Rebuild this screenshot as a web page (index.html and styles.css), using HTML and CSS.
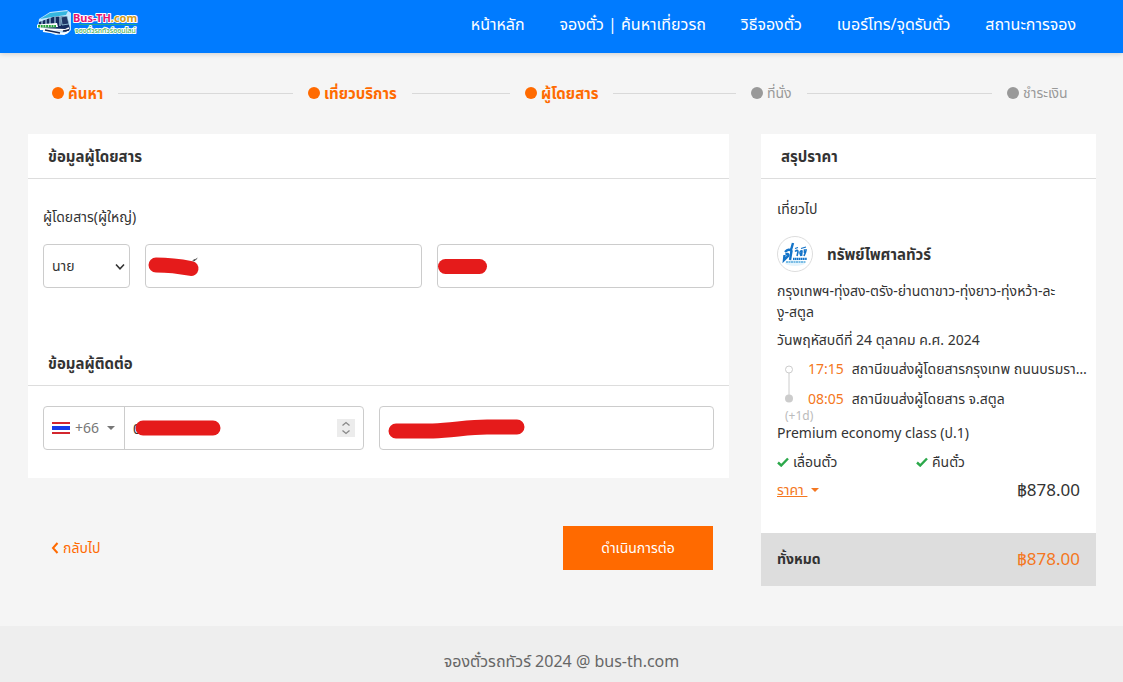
FILE: index.html
```html
<!DOCTYPE html>
<html lang="th">
<head>
<meta charset="utf-8">
<meta name="viewport" content="width=device-width, initial-scale=1">
<title>Bus-TH.com</title>
<link rel="stylesheet" href="styles.css">
</head>
<body>
<header class="topbar">
  <a class="brand" href="#" aria-label="Bus-TH.com">
    <svg class="logo" viewBox="0 0 106 28" aria-hidden="true">
      <path d="M3 9 14 2 31 0 35 3 35 20 31 24 20 25 2 18Z" fill="#e8faff" opacity=".85"/>
      <path d="M4 9 14 3 32 1 30 5 16 7Z" fill="#35b6df"/>
      <path d="M3 12 17 7 31 6 34 19 31 22 3 17Z" fill="#152b5e"/>
      <path d="M6 10v5M10 9v6M14 8v7M19 7v8M24 6v10" stroke="#c9f2ff" stroke-width="1"/>
      <path d="M25 7 31 6 33 14 26 15Z" fill="#203767" stroke="#b5e9f9" stroke-width=".7"/>
      <path d="M1 14.5 21 13 22 17 1 18Z" fill="#fff"/>
      <path d="M2 16.3h18" stroke="#24a53a" stroke-width="2.4" stroke-dasharray="2 .7"/>
      <path d="M4 19 29 20 33 18M7 21 28 24 33 21" fill="none" stroke="#fff" stroke-width="1.8"/>
      <path d="M9 20 24 23M27 21 33 20" stroke="#172650" stroke-width="1.5"/>
      <path d="M43 14.5h58" stroke="#35bd54" stroke-width=".7"/>
      <text class="logo-name" x="37" y="12"><tspan fill="#e61470">Bus-TH</tspan><tspan fill="#d39b17">.com</tspan></text>
      <text class="logo-tag" x="39" y="23">จองตั๋วรถทัวร์ออนไลน์</text>
    </svg>
  </a>
  <nav class="nav">
    <a href="#">หน้าหลัก</a>
    <a href="#">จองตั๋ว | ค้นหาเที่ยวรถ</a>
    <a href="#">วิธีจองตั๋ว</a>
    <a href="#">เบอร์โทร/จุดรับตั๋ว</a>
    <a href="#">สถานะการจอง</a>
  </nav>
</header>

<ol class="steps">
  <li class="step done"><span>ค้นหา</span></li>
  <li class="step done"><span>เที่ยวบริการ</span></li>
  <li class="step done"><span>ผู้โดยสาร</span></li>
  <li class="step"><span>ที่นั่ง</span></li>
  <li class="step"><span>ชำระเงิน</span></li>
</ol>

<main class="content">
  <form class="booking">
    <div class="card">
      <section>
        <h2 class="card-title">ข้อมูลผู้โดยสาร</h2>
        <div class="passenger">
          <p class="label">ผู้โดยสาร(ผู้ใหญ่)</p>
          <div class="passenger-fields">
            <div class="field">
              <select class="control select" aria-label="คำนำหน้า"><option>นาย</option></select>
              <svg class="chevron" viewBox="0 0 10 8" aria-hidden="true"><path d="M1 1.5 5 5.8 9 1.5"/></svg>
            </div>
            <div class="field">
              <input class="control" type="text" aria-label="ชื่อ">
              <svg class="mark" viewBox="0 0 150 44" aria-hidden="true"><path d="M11 21Q28 21 46 24.500"/><path class="tick" d="M48 16.500 50 15.500M49 17 52 14.500"/></svg>
            </div>
            <div class="field">
              <input class="control" type="text" aria-label="นามสกุล">
              <svg class="mark" viewBox="0 0 150 44" aria-hidden="true"><path d="M8.500 22.500H42.500"/></svg>
            </div>
          </div>
        </div>
      </section>
      <section>
        <h2 class="card-title">ข้อมูลผู้ติดต่อ</h2>
        <div class="contact">
          <div class="field phone">
            <button class="country" type="button" aria-label="รหัสประเทศ +66">
              <span class="flag"></span><span>+66</span><span class="caret"></span>
            </button>
            <div class="field phone-number">
              <input class="number" type="text" inputmode="tel" aria-label="หมายเลขโทรศัพท์" value="0">
              <svg class="mark" viewBox="0 0 150 44" aria-hidden="true"><path d="M18 22H88"/></svg>
            </div>
            <button class="spinner" type="button" aria-label="ปรับค่า">
              <svg viewBox="0 0 18 18" aria-hidden="true"><path d="M5.500 6.500 9 3.500 12.500 6.500M5.500 11.500 9 14.500 12.500 11.500"/></svg>
            </button>
          </div>
          <div class="field">
            <input class="control" type="email" aria-label="อีเมล">
            <svg class="mark" viewBox="0 0 150 44" aria-hidden="true"><path d="M17 25H54C75 24 90 21 108 21H138"/></svg>
          </div>
        </div>
      </section>
    </div>
    <div class="actions">
      <a class="back" href="#"><svg viewBox="0 0 8 12" aria-hidden="true"><path d="M6.500 1 2 6 6.500 11"/></svg>กลับไป</a>
      <button class="next" type="submit">ดำเนินการต่อ</button>
    </div>
  </form>

  <aside class="summary">
    <h2 class="card-title">สรุปราคา</h2>
    <div class="trip">
      <p>เที่ยวไป</p>
      <div class="operator">
        <svg class="operator-logo" viewBox="0 0 36 36" aria-hidden="true">
          <circle cx="18" cy="18" r="17.500" fill="#fff" stroke="#ddd"/>
          <ellipse cx="18" cy="27" rx="10" ry="3" fill="#e4f4fd"/>
          <g fill="none" stroke="#1373c8">
            <path d="M8 16Q12 12 14.500 15L13 24M8.500 18.500Q12 17 11 20L7 24 7.500 19M14 14 16 7" stroke-width="2.400"/>
            <path d="M18 15.500Q21 13 21 16L20 20M24 20 23 17Q23 14.500 25 15L24.500 20M29 15 27 20M27.500 17V14H30" stroke-width="1.600"/>
            <path d="M18 12.500 21 11.500M24 12.500 29 11" stroke-width="1.200"/>
            <path d="M16 22.800H30" stroke-width="2.200" stroke-dasharray="1.500 .4"/>
            <path d="M9 26H29" stroke="#58aadd" stroke-width="1.300" stroke-dasharray="2 .5"/>
          </g>
        </svg>
        <strong>ทรัพย์ไพศาลทัวร์</strong>
      </div>
      <p class="route">กรุงเทพฯ-ทุ่งสง-ตรัง-ย่านตาขาว-ทุ่งยาว-ทุ่งหว้า-ละ<br>งู-สตูล</p>
      <p class="date">วันพฤหัสบดีที่ 24 ตุลาคม ค.ศ. 2024</p>
      <div class="stops">
        <svg class="track" viewBox="0 0 10 38" aria-hidden="true"><path d="M5 8V30" stroke="#ccc"/><circle cx="5" cy="4.500" r="3.500" fill="#fff" stroke="#ccc"/><circle cx="5" cy="33.500" r="4" fill="#ccc"/></svg>
        <div class="stop-list">
          <p class="stop"><time>17:15</time><span>สถานีขนส่งผู้โดยสารกรุงเทพ ถนนบรมราชชนนี</span></p>
          <p class="stop"><time>08:05</time><span>สถานีขนส่งผู้โดยสาร จ.สตูล</span></p>
        </div>
      </div>
      <p class="plus-day">(+1d)</p>
      <p class="class-name">Premium economy class (ป.1)</p>
      <div class="perks">
        <span class="perk"><svg viewBox="0 0 12 10" aria-hidden="true"><path d="M1 5.500 4.200 8.500 11 1.500"/></svg>เลื่อนตั๋ว</span>
        <span class="perk"><svg viewBox="0 0 12 10" aria-hidden="true"><path d="M1 5.500 4.200 8.500 11 1.500"/></svg>คืนตั๋ว</span>
      </div>
      <div class="price">
        <a class="price-link" href="#"><span class="underlined">ราคา&nbsp;</span><span class="caret"></span></a>
        <span class="amount">฿878.00</span>
      </div>
    </div>
    <div class="total"><strong>ทั้งหมด</strong><span class="amount">฿878.00</span></div>
  </aside>
</main>

<footer class="footer">จองตั๋วรถทัวร์ 2024 @ bus-th.com</footer>
</body>
</html>
```
FILE: styles.css
```css
* {
  box-sizing: border-box;
}

body {
  margin: 0;
  min-height: 100vh;
  display: flex;
  flex-direction: column;
  background: #f5f5f5;
  color: #333;
  font: 14px/20px "Noto Sans", "Noto Sans Thai", "Open Sans", sans-serif;
}

p,
h2 {
  margin: 0;
}

a {
  color: inherit;
  text-decoration: none;
}

button,
input,
select {
  font: inherit;
  color: inherit;
}

.topbar {
  display: flex;
  align-items: center;
  justify-content: space-between;
  height: 53px;
  padding: 0 47px 5px 36px;
  background: #007bff;
  box-shadow: 0 1px 5px rgba(0, 0, 0, 0.16);
}

.brand,
.logo {
  display: block;
}

.logo {
  width: 106px;
  height: 28px;
}

.logo-name,
.logo-tag {
  paint-order: stroke;
  stroke: #fff;
  stroke-width: 2px;
  stroke-linejoin: round;
}

.logo-name {
  font-size: 11px;
  font-weight: 700;
}

.logo-tag {
  font-size: 7px;
  fill: #28a53b;
}

.nav {
  display: flex;
  gap: 35px;
  color: #fff;
  font-size: 16px;
  line-height: 24px;
  white-space: nowrap;
}

.steps {
  display: grid;
  grid-template-columns: 256fr 217fr 226fr 256fr 65px;
  margin: 0;
  padding: 30px 51px 0 52px;
  list-style: none;
}

.step {
  display: flex;
  align-items: center;
  gap: 4px;
  color: #999;
  line-height: 20px;
  white-space: nowrap;
}

.step::before {
  content: "";
  flex: none;
  width: 12px;
  height: 12px;
  border-radius: 50%;
  background: #999;
}

.step:not(:last-child)::after {
  content: "";
  flex: 1;
  height: 1px;
  margin: 0 15px 0 11px;
  background: #d9d9d9;
}

.done {
  color: #ff6a00;
  font-size: 15px;
  font-weight: 700;
}

.done::before {
  background: #ff6a00;
}

.content {
  display: grid;
  grid-template-columns: 701fr 335fr;
  gap: 32px;
  align-items: start;
  padding: 31px 27px 40px 28px;
}

.booking,
.summary {
  min-width: 0;
}

.card,
.summary {
  background: #fff;
}

.card-title {
  padding: 12px 20px;
  border-bottom: 1px solid #ddd;
  font-size: 15px;
  font-weight: 700;
  line-height: 20px;
}

.passenger {
  padding: 28px 15px 53px;
}

.label {
  margin-bottom: 17px;
}

.passenger-fields {
  display: grid;
  grid-template-columns: 87px 1fr 1fr;
  gap: 15px;
}

.contact {
  display: grid;
  grid-template-columns: 321fr 335fr;
  gap: 15px;
  padding: 20px 15px 28px;
}

.field {
  position: relative;
  min-width: 0;
}

.control,
.phone {
  display: block;
  width: 100%;
  height: 44px;
  border: 1px solid #ccc;
  border-radius: 4px;
  background: #fff;
}

.control {
  padding: 0 8px;
}

.select {
  appearance: none;
}

.chevron {
  position: absolute;
  right: 5px;
  top: 19px;
  width: 10px;
  height: 8px;
  fill: none;
  stroke: #333;
  stroke-width: 1.6;
  pointer-events: none;
}

.mark {
  position: absolute;
  left: 0;
  top: 0;
  width: 150px;
  height: 44px;
  fill: none;
  stroke: #e51b1b;
  stroke-width: 15;
  stroke-linecap: round;
  stroke-linejoin: round;
  pointer-events: none;
}

.tick {
  stroke: #444;
  stroke-width: 1;
}

.phone {
  display: flex;
  align-items: center;
}

.country {
  display: flex;
  align-items: center;
  gap: 5px;
  width: 81px;
  height: 42px;
  padding: 0 8px;
  border: 0;
  border-right: 1px solid #ccc;
  background: none;
  color: #777;
}

.flag {
  width: 18px;
  height: 12px;
  background: linear-gradient(#d3262f 2px, #fff 2px 4px, #173be8 4px 8px, #fff 8px 10px, #d3262f 10px);
}

.caret {
  display: inline-block;
  border: 4px solid transparent;
  border-top-color: currentColor;
  border-bottom: 0;
}

.country .caret {
  margin-left: 3px;
}

.phone-number {
  flex: 1;
  height: 42px;
}

.number {
  width: 100%;
  height: 42px;
  padding: 0 8px;
  border: 0;
  background: none;
}

.phone-number .mark {
  top: -1px;
}

.spinner {
  width: 18px;
  height: 18px;
  margin-right: 8px;
  padding: 0;
  border: 0;
  background: #ececec;
}

.spinner svg {
  display: block;
  fill: none;
  stroke: #888;
  stroke-width: 1.3;
}

.actions {
  display: flex;
  align-items: center;
  justify-content: space-between;
  padding: 48px 16px 0 23px;
}

.back {
  display: flex;
  align-items: center;
  gap: 4px;
  color: #ff6a00;
}

.back svg {
  width: 8px;
  height: 12px;
  fill: none;
  stroke: currentColor;
  stroke-width: 2;
}

.next {
  width: 150px;
  height: 44px;
  border: 0;
  background: #ff6a00;
  color: #fff;
}

.trip {
  padding: 20px 16px 31px;
}

.operator {
  display: flex;
  align-items: center;
  gap: 14px;
  margin: 17px 0 8px;
  font-size: 15px;
}

.operator-logo {
  width: 36px;
  height: 36px;
}

.route {
  line-height: 21px;
  white-space: nowrap;
}

.date {
  margin: 8px 0 9px;
}

.stops {
  display: flex;
  align-items: center;
  gap: 14px;
  margin-right: -8px;
  padding-left: 7px;
}

.track {
  flex: none;
  width: 10px;
  height: 38px;
}

.stop-list {
  display: grid;
  gap: 10px;
  min-width: 0;
}

.stop {
  display: flex;
  gap: 8px;
  min-width: 0;
}

.stop time {
  color: #f47721;
}

.stop span {
  overflow: hidden;
  text-overflow: ellipsis;
  white-space: nowrap;
}

.plus-day {
  padding-left: 8px;
  color: #bbb;
  font-size: 12px;
  line-height: 14px;
}

.perks {
  display: grid;
  grid-template-columns: 139fr 164fr;
  margin-top: 9px;
}

.perk {
  display: flex;
  align-items: center;
  gap: 4px;
}

.perk svg {
  width: 12px;
  height: 10px;
  fill: none;
  stroke: #2ba84a;
  stroke-width: 2.4;
}

.price,
.total {
  display: flex;
  align-items: center;
  justify-content: space-between;
}

.price {
  margin-top: 6px;
}

.price-link {
  display: flex;
  align-items: center;
  gap: 4px;
  color: #f47721;
}

.underlined {
  text-decoration: underline;
}

.amount {
  font-size: 17px;
  line-height: 24px;
}

.total {
  padding: 14px 16px 15px;
  background: #ddd;
}

.total .amount {
  color: #f47721;
}

.footer {
  flex: 1;
  padding: 23px 16px 8px;
  background: #eee;
  color: #666;
  font-size: 16px;
  line-height: 24px;
  text-align: center;
}
```
